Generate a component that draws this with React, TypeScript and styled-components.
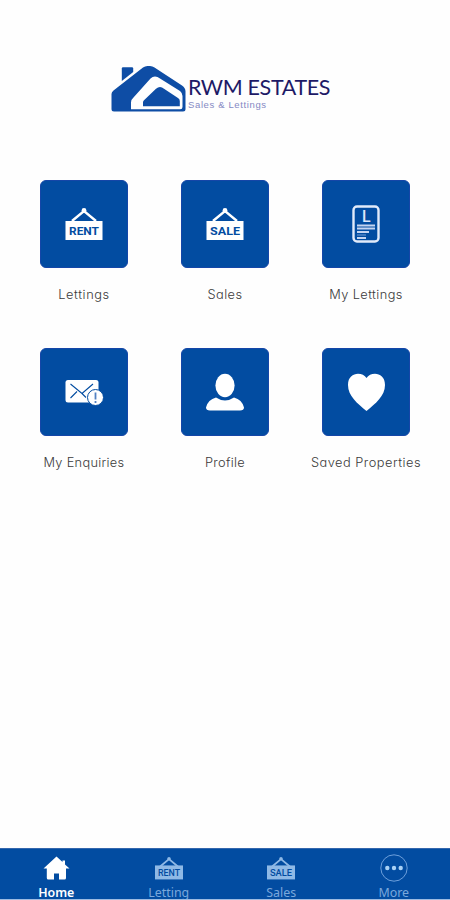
import React from "react";
import styled, { createGlobalStyle } from "styled-components";

const BLUE = "#024ca1";
const NAVY = "#1d1a66";
const FADED = "#8fb9e6";

const GlobalStyle = createGlobalStyle`
  body { margin: 0; background: #fefefe; }
  * { box-sizing: border-box; }
`;

const Screen = styled.div`
  width: 450px;
  height: 900px;
  display: flex;
  flex-direction: column;
  overflow: hidden;
  background: #fefefe;
`;

const Header = styled.header`
  height: 180px;
  padding: 65px 0 0 110px;
  display: flex;
  align-items: flex-start;
`;

const House = styled.svg`
  display: block;
  flex: none;
`;

const Wordmark = styled.div`
  display: flex;
  flex-direction: column;
  padding: 11px 0 0 1px;
  white-space: nowrap;
`;

const BrandName = styled.span`
  font: 400 21.5px/23px Lato, sans-serif;
  letter-spacing: -0.36px;
  color: ${NAVY};
`;

const BrandTagline = styled.span`
  font: 400 9.5px/11px "Liberation Sans", sans-serif;
  letter-spacing: 0.63px;
  color: #8589c4;
`;

const Menu = styled.main`
  flex: 1;
  padding: 0 13px;
  display: grid;
  grid-template-columns: repeat(3, 141px);
  grid-auto-rows: 168px;
`;

const MenuItem = styled.div`
  display: flex;
  flex-direction: column;
  align-items: center;
`;

const Tile = styled.div`
  width: 88px;
  height: 88px;
  border-radius: 6px;
  border: 1px solid #1546a8;
  background: ${BLUE};
  display: flex;
  align-items: center;
  justify-content: center;
`;

const Caption = styled.span<{ $spacing: number }>`
  margin-top: 17px;
  padding-left: 1px;
  font: 300 12.8px/20px Inter, "Open Sans", sans-serif;
  font-feature-settings: "cv11" 1;
  letter-spacing: ${(p) => p.$spacing}px;
  color: #3a3a3a;
  white-space: nowrap;
`;

const NavBar = styled.nav`
  height: 52px;
  flex: none;
  display: grid;
  grid-template-columns: repeat(4, 1fr);
  background: ${BLUE};
  border-top: 1px solid #3467ad;
  border-bottom: 1px solid #9dbbe2;
  overflow: hidden;
`;

const NavItem = styled.div<{ $active?: boolean }>`
  display: flex;
  flex-direction: column;
  align-items: center;
  padding-top: 5px;
  color: ${(p) => (p.$active ? "#ffffff" : FADED)};
`;

const NavLabel = styled.span<{ $active?: boolean }>`
  margin-top: 2px;
  font: ${(p) => (p.$active ? 600 : 400)} 12.4px/17px "Noto Sans", "Open Sans", sans-serif;
  opacity: ${(p) => (p.$active ? 1 : 0.85)};
`;

const Icon = styled.svg`
  display: block;
  flex: none;
`;

const Logo = () => (
  <>
    <House width="77" height="48" viewBox="110 65 77 48">
      <path d="M123 67.300h9q1.200 0 1.200 1.200v3.500l-11.400 9V68.500q0-1.200 1.200-1.200z" fill="#0e4da5" />
      <path
        d="M111.500 94q0-2 2-3.600L143 67.600q2-1.600 4.500-1.600h2.500q2.500 0 4.500 1.500L182 85.500q3.500 2.500 3.500 6V109q0 2.500-2.500 2.500h-69q-2.500 0-2.500-2.500z"
        fill="#0e4da5"
      />
      <path
        d="M131 109.300V102.500q0-3 2.500-5L150.500 78.500q2-2 4.500-2t5 2L180 91q2.500 2 2.500 5v11q0 2.300-2.300 2.300z"
        fill="#fefefe"
      />
      <path
        d="M143 106.200v-4q0-1 1-2L156 88.700q2-1.700 4-1.700t4 1.700L178 98q1.800 1.200 1.800 3v5.200z"
        fill="#0e4da5"
      />
    </House>
    <Wordmark>
      <BrandName>RWM ESTATES</BrandName>
      <BrandTagline>Sales &amp; Lettings</BrandTagline>
    </Wordmark>
  </>
);

const SignIcon = ({ word, small = false }: { word: string; small?: boolean }) => (
  <Icon width={small ? 28 : 40} height={small ? 28 : 40} viewBox={small ? "1 0 38 38" : "0 0 40 40"}>
    <path
      d="M8 17L20 7l12 10" fill="none" stroke={small ? FADED : "#fff"} strokeWidth="2.4"
    />
    <circle cx="20" cy="6.500" r="2.400" fill={small ? FADED : "#fff"} />
    <path d={small ? "M1 15.500h38V34.500H1z" : "M1.500 17h37v19h-37z"} fill={small ? FADED : "#fff"} />
    <text
      x="5" y={small ? 29.8 : 31} fontFamily="Roboto"
      fontSize={small ? 13 : 11.5} fontWeight={small ? 500 : 700} fill={BLUE}
      textLength="30" lengthAdjust="spacingAndGlyphs"
    >
      {word}
    </text>
  </Icon>
);

const DocumentIcon = () => (
  <Icon width="40" height="40" viewBox="0 0 40 40">
    <rect x="7.500" y="2.500" width="25" height="35" rx="3.500" fill="none" stroke="#e1eafa" strokeWidth="2.400" />
    <text x="16" y="17.500" fontFamily="Roboto" fontSize="16" fontWeight="500" fill="#dce6fa">L</text>
    <path d="M11 21.500h18M11 24.500h18M11 28h12M11 34h9" stroke="#c4d4f1" strokeWidth="2" />
    <path d="M11 31h9" stroke="#789fd5" strokeWidth="1" />
  </Icon>
);

const MailIcon = () => (
  <Icon width="40" height="40" viewBox="0 0 40 40">
    <rect x="1.500" y="8" width="33" height="22.500" rx="2.500" fill="#fff" />
    <path d="M6.500 12l11.500 9.500 11-9.500M6.500 26l6.500-6.500M18 21.500l4 4" fill="none" stroke={BLUE} strokeWidth="1.100" />
    <circle cx="31.500" cy="25.500" r="8" fill="#fff" stroke={BLUE} strokeWidth="1" />
    <path d="M31.500 20.500v7M31.500 29v2" stroke="#5381c2" strokeWidth="1.800" />
  </Icon>
);

const ProfileIcon = () => (
  <Icon width="40" height="40" viewBox="0 0 40 40">
    <ellipse cx="20" cy="13.500" rx="9.600" ry="11.800" fill="#fff" />
    <path d="M11 25.500q9 6 18 0 8 2 10 10 0 3-4 3H5q-4 0-4-3 2-8 10-10z" fill="#fff" />
  </Icon>
);

const HeartIcon = () => (
  <Icon width="40" height="40" viewBox="0 0 40 40">
    <path d="M20.500 6C16.500-.5 2-.5 2 13 2 24 11.500 31.500 20.500 39c9-7.500 18.500-15 18.500-26C39-.5 24.500-.5 20.500 6z" fill="#fff" />
  </Icon>
);

const HomeIcon = () => (
  <Icon width="28" height="28" viewBox="0 0 28 28">
    <path
      d="M14.500 2.500L1.500 14.500h3.300V24q0 1.500 1.500 1.500H12v-6h5v6h5.500q1.500 0 1.500-1.500v-9.500h3.500L23 10.400V6.500h-2.500v1.600z"
      fill="currentColor"
    />
  </Icon>
);

const MoreIcon = () => (
  <Icon width="28" height="28" viewBox="0 0 28 28">
    <circle cx="14" cy="14" r="13.200" fill="none" stroke="#6d9fdb" strokeWidth="1" />
    <circle cx="7.300" cy="14" r="2.200" fill="#a9d1f5" />
    <circle cx="14" cy="14" r="2.200" fill="#a9d1f5" />
    <circle cx="20.700" cy="14" r="2.200" fill="#a9d1f5" />
  </Icon>
);

const menu = [
  { label: "Lettings", icon: <SignIcon word="RENT" />, spacing: 0.6 },
  { label: "Sales", icon: <SignIcon word="SALE" />, spacing: 0.4 },
  { label: "My Lettings", icon: <DocumentIcon />, spacing: 0.42 },
  { label: "My Enquiries", icon: <MailIcon />, spacing: 0.3 },
  { label: "Profile", icon: <ProfileIcon />, spacing: 0.3 },
  { label: "Saved Properties", icon: <HeartIcon />, spacing: 0.5 },
];

const tabs = [
  { label: "Home", icon: <HomeIcon />, active: true },
  { label: "Letting", icon: <SignIcon word="RENT" small /> },
  { label: "Sales", icon: <SignIcon word="SALE" small /> },
  { label: "More", icon: <MoreIcon /> },
];

export default function App() {
  return (
    <Screen>
      <GlobalStyle />
      <Header>
        <Logo />
      </Header>
      <Menu>
        {menu.map((item) => (
          <MenuItem key={item.label}>
            <Tile>{item.icon}</Tile>
            <Caption $spacing={item.spacing}>{item.label}</Caption>
          </MenuItem>
        ))}
      </Menu>
      <NavBar>
        {tabs.map((tab) => (
          <NavItem key={tab.label} $active={tab.active}>
            {tab.icon}
            <NavLabel $active={tab.active}>{tab.label}</NavLabel>
          </NavItem>
        ))}
      </NavBar>
    </Screen>
  );
}
